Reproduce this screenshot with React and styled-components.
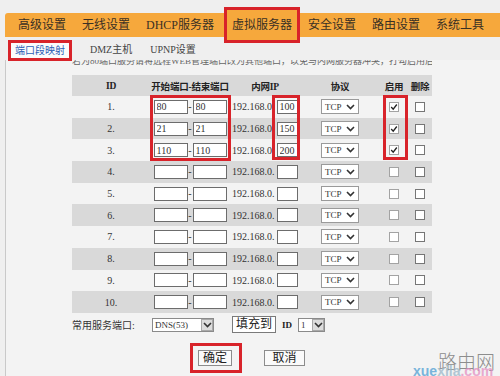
import React from 'react'
import styled, { css, createGlobalStyle } from 'styled-components'

const GlobalStyle = createGlobalStyle`
  html, body { margin: 0; padding: 0; background: #efefef; }
  body { font-family: "Liberation Serif", "Noto Sans CJK SC", serif; }
`

const RED = '#d8232a'

const rows = [
  { start: '80', end: '80', ip: '100', on: true },
  { start: '21', end: '21', ip: '150', on: true },
  { start: '110', end: '110', ip: '200', on: true },
  {}, {}, {}, {}, {}, {}, {},
]

const Chevron = () => (
  <svg width="9" height="6" viewBox="0 0 9 6">
    <polyline points="1,1 4.5,4.5 8,1" fill="none" stroke="#333" strokeWidth="1.6" />
  </svg>
)

const Check = () => (
  <svg width="8" height="8" viewBox="0 0 8 8">
    <polyline points="1.2,4 3.2,6.2 6.8,1.5" fill="none" stroke="#222" strokeWidth="1.3" />
  </svg>
)

const Protocol = () => (
  <ProtoSelect>
    <span>TCP</span>
    <Chevron />
  </ProtoSelect>
)

const Combo = ({ value, width }) => (
  <ComboBox $w={width}>
    <span>{value}</span>
    <ComboArrow><Chevron /></ComboArrow>
  </ComboBox>
)

const App = () => {
  return (
    <Page>
      <GlobalStyle />
      <TabBar>
        <Tab>高级设置</Tab>
        <Tab>无线设置</Tab>
        <Tab>DHCP服务器</Tab>
        <Tab $active>虚拟服务器</Tab>
        <Tab>安全设置</Tab>
        <Tab>路由设置</Tab>
        <Tab>系统工具</Tab>
      </TabBar>

      <SubBar>
        <SubTab $active>端口段映射</SubTab>
        <SubTab>DMZ主机</SubTab>
        <SubTab>UPNP设置</SubTab>
      </SubBar>

      <Panel>
        <Note>
          <span>若为80端口服务请将远程WEB管理端口改为其他端口，以免与内网服务器冲突，打勾启用后才能使用该服务器。</span>
        </Note>

        <TableWrap>
          <Row $h={21} $shade>
            <HeadCell>ID</HeadCell>
            <HeadCell>开始端口-结束端口</HeadCell>
            <HeadCell>内网IP</HeadCell>
            <HeadCell>协议</HeadCell>
            <HeadCell>启用</HeadCell>
            <HeadCell>删除</HeadCell>
          </Row>
          {rows.map((r, i) => (
            <Row key={i} $h={21.7} $shade={i % 2 === 1}>
              <Cell>{i + 1}.</Cell>
              <Cell>
                <Field $w={34} readOnly value={r.start || ''} />
                <Dash>-</Dash>
                <Field $w={34} readOnly value={r.end || ''} />
              </Cell>
              <IpCell>
                <span>192.168.0.</span>
                <Field $w={21} readOnly value={r.ip || ''} />
              </IpCell>
              <Cell><Protocol /></Cell>
              <Cell><Box $light>{r.on && <Check />}</Box></Cell>
              <Cell><Box /></Cell>
            </Row>
          ))}
          <Mark style={{ left: 78, top: 20, width: 81, height: 66 }} />
          <Mark style={{ left: 200, top: 20, width: 28, height: 65 }} />
          <Mark style={{ left: 311, top: 20, width: 25, height: 65 }} />
        </TableWrap>

        <ServiceRow>
          <Label>常用服务端口:</Label>
          <Combo value="DNS(53)" width={62} />
          <FillButton>填充到</FillButton>
          <IdLabel>ID</IdLabel>
          <Combo value="1" width={27} />
        </ServiceRow>

        <ActionRow>
          <Highlight>
            <Button $w={34}>确定</Button>
          </Highlight>
          <Button $w={41} $gap={22}>取消</Button>
        </ActionRow>
      </Panel>

      <Watermark>
        <WmTitle>路由网</WmTitle>
        <WmSite><b>xue</b><i>xila</i><em>.com</em></WmSite>
      </Watermark>
    </Page>
  )
}

const Page = styled.div`
  position: relative;
  width: 500px;
  height: 376px;
  overflow: hidden;
  padding-top: 13px;
  box-sizing: border-box;
  background: #efefef;
`

const TabBar = styled.div`
  margin-left: 5px;
  height: 24px;
  background: #f6a83c;
  border-radius: 3px 0 0 0;
  display: flex;
  align-items: center;
  gap: 16px;
  padding-left: 13px;
`

const Tab = styled.div`
  font-size: 12px;
  color: #3a3024;
  white-space: nowrap;
  line-height: 24px;

  ${p => p.$active && css`
    height: 36px;
    box-sizing: border-box;
    line-height: 30px;
    padding: 0 5px;
    margin: 0 -8px 0 -6px;
    border: 3px solid ${RED};
    background: #f6a83c;
  `}
`

const SubBar = styled.div`
  height: 23px;
  display: flex;
  align-items: flex-end;
  gap: 18px;
  padding-left: 8px;
`

const SubTab = styled.div`
  font-size: 10px;
  color: #444;
  line-height: 18px;
  white-space: nowrap;
  margin-bottom: 1px;

  ${p => p.$active && css`
    position: relative;
    z-index: 1;
    margin-bottom: -1px;
    height: 21px;
    box-sizing: border-box;
    padding: 0 4px;
    line-height: 15px;
    border: 3px solid ${RED};
    background: #fbfbfb;
    color: #2d5fb5;
  `}
`

const Panel = styled.div`
  margin-left: 5px;
  height: 316px;
  box-sizing: border-box;
  border-left: 1px solid #c9c9c9;
  background: #f3f3f3;
  padding-left: 66px;
`

const Note = styled.div`
  width: 360px;
  height: 7px;
  overflow: hidden;
  font-size: 9px;
  color: #666;
  white-space: nowrap;

  span {
    display: block;
    line-height: 11px;
    margin-top: -4px;
  }
`

const TableWrap = styled.div`
  position: relative;
  margin-top: 8px;
  width: 360px;
`

const Row = styled.div`
  display: grid;
  grid-template-columns: 78px 80px 70px 80px 28px 24px;
  align-items: center;
  height: ${p => p.$h}px;
  background: ${p => (p.$shade ? '#d9d9d9' : '#f3f3f3')};
`

const Cell = styled.div`
  display: flex;
  align-items: center;
  justify-content: center;
  font-size: 10px;
  color: #333;
`

const HeadCell = styled(Cell)`
  font-size: 9.5px;
  font-weight: bold;
  color: #222;
  white-space: nowrap;
  letter-spacing: -0.2px;
`

const IpCell = styled(Cell)`
  justify-content: flex-start;
  padding-left: 2px;
  gap: 2px;
  white-space: nowrap;
`

const Field = styled.input`
  width: ${p => p.$w}px;
  height: 14px;
  box-sizing: border-box;
  margin: 0;
  padding: 0 2px;
  border: 1px solid #6c6c6c;
  background: #fff;
  font-family: "Liberation Serif", serif;
  font-size: 10px;
  color: #333;
  outline: none;
`

const Dash = styled.span`
  width: 5px;
  text-align: center;
  font-size: 10px;
  color: #333;
`

const ProtoSelect = styled.div`
  width: 38px;
  height: 15px;
  box-sizing: border-box;
  border: 1px solid #9a9a9a;
  background: #fff;
  display: flex;
  align-items: center;
  justify-content: space-between;
  padding: 0 3px 0 3px;
  font-size: 9px;
  color: #333;
`

const Box = styled.span`
  width: 10px;
  height: 10px;
  box-sizing: border-box;
  border: 1px solid ${p => (p.$light ? '#a3a3a3' : '#767676')};
  background: #fff;
  display: flex;
  align-items: center;
  justify-content: center;
`

const Mark = styled.div`
  position: absolute;
  box-sizing: border-box;
  border: 3px solid ${RED};
  pointer-events: none;
`

const ServiceRow = styled.div`
  margin-top: 3px;
  height: 18px;
  display: flex;
  align-items: center;
`

const Label = styled.span`
  width: 80px;
  font-size: 10px;
  color: #333;
  white-space: nowrap;
`

const ComboBox = styled.div`
  width: ${p => p.$w}px;
  height: 14px;
  box-sizing: border-box;
  border: 1px solid #8a8a8a;
  background: #fff;
  display: flex;
  align-items: center;
  justify-content: space-between;
  padding-left: 2px;
  font-size: 9px;
  color: #333;
`

const ComboArrow = styled.span`
  width: 12px;
  height: 12px;
  box-sizing: border-box;
  border: 1px solid #a9a9a9;
  background: #dcdcdc;
  display: flex;
  align-items: center;
  justify-content: center;
`

const FillButton = styled.div`
  margin-left: 18px;
  width: 44px;
  height: 17px;
  box-sizing: border-box;
  border: 1px solid #7a7a7a;
  background: #fff;
  font-size: 12px;
  line-height: 15px;
  text-align: center;
  color: #222;
`

const IdLabel = styled.span`
  margin: 0 6px;
  font-size: 9px;
  font-weight: bold;
  color: #222;
`

const ActionRow = styled.div`
  margin-top: 9px;
  padding-left: 118px;
  display: flex;
  align-items: center;
`

const Highlight = styled.div`
  display: flex;
  border: 3px solid ${RED};
  padding: 4px 7px 4px 5px;
`

const Button = styled.div`
  width: ${p => p.$w}px;
  height: 16px;
  margin-left: ${p => p.$gap || 0}px;
  box-sizing: border-box;
  border: 1px solid #8c8c8c;
  background: #fafafa;
  font-size: 12px;
  line-height: 14px;
  text-align: center;
  color: #222;
`

const Watermark = styled.div`
  position: absolute;
  right: 5px;
  bottom: -2px;
  width: 82px;
  height: 28px;
  pointer-events: none;
`

const WmTitle = styled.div`
  position: absolute;
  right: 0;
  top: 0;
  font-family: "Noto Sans CJK SC", sans-serif;
  font-size: 19px;
  line-height: 22px;
  color: #8d8d8d;
  font-weight: 300;
`

const WmSite = styled.div`
  position: absolute;
  left: 0;
  bottom: 0;
  font-family: "Liberation Sans", sans-serif;
  font-size: 14px;
  line-height: 14px;
  font-weight: bold;
  opacity: 0.75;

  b { font-weight: bold; color: #4f9fd3; }
  i { font-style: normal; color: #9bb7c9; }
  em { font-style: normal; color: #e58fc2; }
`

export default App
